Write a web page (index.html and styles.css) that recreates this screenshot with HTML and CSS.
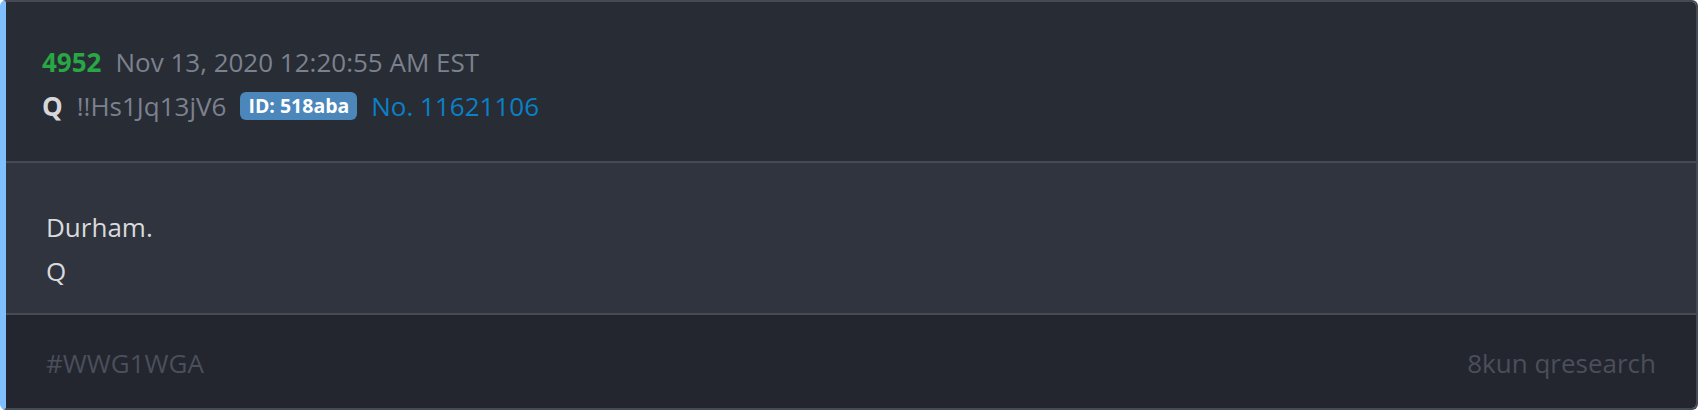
FILE: index.html
```html
<!DOCTYPE html>
<html lang="en">
<head>
<meta charset="utf-8">
<title>Post 4952</title>
<link rel="stylesheet" href="styles.css">
</head>
<body>
<article class="post">
  <header class="post-header">
    <div class="row">
      <span class="post-num">4952</span>
      <span class="post-date">Nov 13, 2020 12:20:55 AM EST</span>
    </div>
    <div class="row">
      <span class="author">Q</span>
      <span class="trip">!!Hs1Jq13jV6</span>
      <span class="badge">ID: 518aba</span>
      <a class="link" href="#">No. 11621106</a>
    </div>
  </header>
  <div class="post-body">
    <div class="line">Durham.</div>
    <div class="line">Q</div>
  </div>
  <footer class="post-footer">
    <span>#WWG1WGA</span>
    <span>8kun qresearch</span>
  </footer>
</article>
</body>
</html>
```
FILE: styles.css
```css
html, body {
  margin: 0;
  padding: 0;
  background: #ffffff;
}
body {
  font-family: "Open Sans", "Liberation Sans", sans-serif;
  font-size: 26px;
  line-height: 44px;
}
.post {
  box-sizing: border-box;
  width: 1698px;
  border: 2px solid #454a55;
  border-left: 6px solid #7fbfff;
  border-radius: 6px;
  overflow: hidden;
}
.post-header {
  background: #282c35;
  padding: 38px 36px 33px 36px;
  border-bottom: 2px solid #454a55;
}
.row {
  display: flex;
  align-items: center;
  gap: 14px;
  height: 44px;
}
.post-num {
  color: #28a745;
  font-weight: 700;
}
.post-date, .trip {
  color: #7c818e;
}
.author {
  color: #d6d7da;
  font-weight: 700;
}
.badge {
  display: inline-flex;
  align-items: center;
  height: 28px;
  padding: 0 8px;
  border-radius: 6px;
  background: #4b87ba;
  color: #ffffff;
  font-weight: 700;
  font-size: 19.5px;
  line-height: 28px;
}
.link {
  color: #0a80c6;
  text-decoration: none;
}
.post-body {
  background: #2f343e;
  color: #d9dadc;
  padding: 42px 40px 20px 40px;
  border-bottom: 2px solid #454a55;
}
.post-footer {
  display: flex;
  justify-content: space-between;
  background: #23262e;
  color: #4a4f5b;
  padding: 26px 40px 23px 40px;
}
```
